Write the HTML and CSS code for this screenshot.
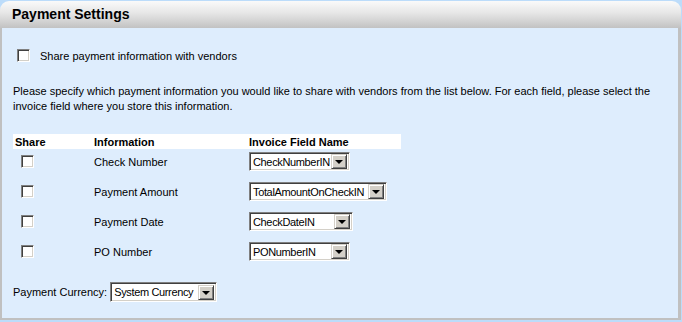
FILE: index.html
```html
<!DOCTYPE html>
<html lang="en">
<head>
  <meta charset="UTF-8">
  <title>Payment Settings</title>
  <link rel="stylesheet" href="styles.css">
</head>
<body>

<div class="panel">
  <div class="panel-head">Payment Settings</div>

  <div class="panel-body">
    <label class="share-all">
      <span class="check"></span>
      Share payment information with vendors
    </label>

    <p class="intro">
      Please specify which payment information you would like to share with vendors from the list below. For each field, please select the
      invoice field where you store this information.
    </p>

    <div class="fields">
      <div class="fields-head">
        <span>Share</span>
        <span>Information</span>
        <span>Invoice Field Name</span>
      </div>

      <div class="fields-rows">
        <div class="field-row">
          <span class="check"></span>
          <span>Check Number</span>
          <span class="combo w101"><span class="combo-text">CheckNumberIN</span><span class="combo-btn"></span></span>
        </div>
        <div class="field-row">
          <span class="check"></span>
          <span>Payment Amount</span>
          <span class="combo w138"><span class="combo-text">TotalAmountOnCheckIN</span><span class="combo-btn"></span></span>
        </div>
        <div class="field-row">
          <span class="check"></span>
          <span>Payment Date</span>
          <span class="combo w104"><span class="combo-text">CheckDateIN</span><span class="combo-btn"></span></span>
        </div>
        <div class="field-row">
          <span class="check"></span>
          <span>PO Number</span>
          <span class="combo w101"><span class="combo-text">PONumberIN</span><span class="combo-btn"></span></span>
        </div>
      </div>
    </div>

    <div class="currency">
      <span>Payment Currency:</span>
      <span class="combo w107"><span class="combo-text">System Currency</span><span class="combo-btn"></span></span>
    </div>
  </div>
</div>

</body>
</html>
```

FILE: styles.css
```css
* {
  margin: 0;
  padding: 0;
  box-sizing: border-box;
}

body {
  background: #bcdcfa;
  font-family: 'Liberation Sans', Arial, sans-serif;
  font-size: 11px;
  color: #000;
  padding: 1px 1px 2px 0;
  height: 322px;
  overflow: hidden;
}

.panel {
  display: flex;
  flex-direction: column;
  height: 319px;
}

.panel-head {
  height: 27px;
  border-radius: 9px 9px 0 0;
  background: linear-gradient(#fafafa, #e6e6e6 45%, #c2c2c2);
  font-size: 14px;
  font-weight: bold;
  padding: 5px 0 0 12px;
  color: #000;
}

.panel-body {
  flex: 1;
  background: #deedfd;
  border-left: 2px solid #c0c0c0;
  border-right: 3px solid #c0c0c0;
  border-bottom: 2px solid #c0c0c0;
  padding: 21px 0 0 11px;
}

/* classic sunken checkbox */
.check {
  display: inline-block;
  width: 13px;
  height: 13px;
  background: #fff;
  border: 1px solid;
  border-color: #808080 #fff #fff #808080;
  box-shadow: inset 1px 1px #404040, inset -1px -1px #d4d0c8;
}

.share-all {
  display: flex;
  align-items: center;
  gap: 10px;
  padding-left: 4px;
  height: 13px;
}

.intro {
  margin-top: 22px;
  line-height: 15px;
  width: 650px;
}

.fields {
  margin-top: 20px;
  width: 388px;
}

.fields-head,
.field-row {
  display: grid;
  grid-template-columns: 81px 155px auto;
  align-items: center;
}

.fields-head {
  background: #fff;
  height: 15px;
  font-weight: bold;
  padding-left: 2px;
}

.fields-head span:nth-child(2),
.fields-head span:nth-child(3) {
  margin-left: -2px;
}

.fields-rows {
  display: flex;
  flex-direction: column;
  gap: 11px;
  padding-top: 3px;
}

.field-row {
  height: 19px;
}

.field-row .check {
  margin-left: 8px;
}

/* fake dropdown */
.combo {
  display: inline-flex;
  height: 19px;
  background: #fff;
  border: 1px solid;
  border-color: #808080 #fff #fff #808080;
  box-shadow: inset 1px 1px #404040, inset -1px -1px #d4d0c8;
  padding: 2px;
  align-items: center;
}

.combo-text {
  flex: 1;
  padding-left: 1px;
  white-space: nowrap;
  font-size: 11px;
  letter-spacing: -0.35px;
}

.combo-btn {
  flex: none;
  width: 16px;
  height: 15px;
  background: #d4d0c8;
  border: 1px solid;
  border-color: #d4d0c8 #404040 #404040 #d4d0c8;
  box-shadow: inset 1px 1px #fff, inset -1px -1px #808080;
  position: relative;
}

.combo-btn::after {
  content: "";
  position: absolute;
  left: 3px;
  top: 5px;
  border-left: 4px solid transparent;
  border-right: 4px solid transparent;
  border-top: 4px solid #000;
}

.w101 { width: 101px; }
.w104 { width: 104px; }
.w107 { width: 107px; }
.w138 { width: 138px; }

.currency {
  margin-top: 21px;
  display: flex;
  align-items: center;
  gap: 3px;
}

.currency .combo {
  height: 20px;
}
```
